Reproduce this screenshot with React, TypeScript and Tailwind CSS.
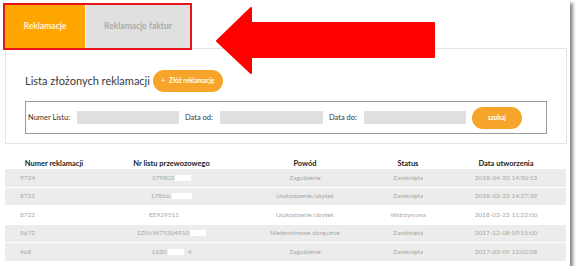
const rows = [
  { id: "9724", list: "179802", hidden: "w-[16px]", after: "", reason: "Zagubienie", status: "Zamknięta", date: "2018-04-20 14:50:13", bg: "bg-[#ececec]" },
  { id: "8731", list: "17866:", hidden: "w-[20px]", after: "", reason: "Uszkodzenie/ubytek", status: "Zamknięta", date: "2018-03-23 14:27:39", bg: "bg-[#ececec]" },
  { id: "8722", list: "EE929511", hidden: "w-[14px]", after: "", reason: "Uszkodzenie/ubytek", status: "Wstrzymana", date: "2018-03-23 11:22:00", bg: "bg-white" },
  { id: "5672", list: "1Z0VW75304910", hidden: "w-[16px]", after: "", reason: "Nieterminowe doręcznie", status: "Zamknięta", date: "2017-12-08 09:15:00", bg: "bg-[#ececec]" },
  { id: "468", list: "1630", hidden: "w-[16px]", after: "4", reason: "Zagubienie", status: "Zamknięta", date: "2017-03-09 12:02:08", bg: "bg-[#ececec]" },
];

const cols = "grid grid-cols-[98px_137px_130px_76px_120px] items-center";

function Arrow() {
  return (
    <svg
      className="absolute left-[215px] top-[6px] z-20"
      width="222"
      height="70"
      viewBox="0 0 222 70"
    >
      <polygon
        points="2,35 36,2 36,17 219,17 219,51 36,51 36,67"
        fill="#ff0000"
        stroke="#ff0000"
        strokeWidth="2"
        strokeLinejoin="round"
      />
    </svg>
  );
}

export default function App() {
  return (
    <div
      className="relative w-[570px] h-[266px] bg-white shadow-[3px_3px_3px_rgba(0,0,0,0.45)] overflow-visible"
      style={{ fontFamily: "Lato, 'Open Sans', sans-serif" }}
    >
      <Arrow />

      {/* tabs */}
      <div className="relative z-10 pt-[3px] pl-[3px]">
        <div className="flex w-[189px] h-[47px] border-2 border-[#e8141c] bg-white">
          <div className="flex w-[80px] items-center justify-center bg-[#ffa500] text-[8.5px] font-bold text-[#fff5dc]">
            Reklamacje
          </div>
          <div className="ml-px flex flex-1 items-center justify-center bg-[#e0e0e0] text-[8.5px] font-bold text-[#ababab]">
            Reklamacje faktur
          </div>
        </div>
      </div>

      {/* panel */}
      <div className="-mt-[2px] ml-[5px] w-[562px] border border-[#e6e6e6] pl-[19px] pt-[21px] pb-[9px]">
        <div className="flex h-[22px] items-center gap-[3px]">
          <span className="text-[11px] text-[#3a3a3a]">Lista złożonych reklamacji</span>
          <button className="flex h-[22px] w-[70px] items-center justify-center gap-[4px] rounded-full bg-[#f7a42a] text-[6.5px] font-bold text-white">
            <span>+</span>
            <span>Złóż reklamację</span>
          </button>
        </div>

        <div className="mt-[9px] flex h-[33px] w-[522px] items-center border border-[#9a9a9a] pl-[2px] text-[7.5px] text-[#333]">
          <span className="w-[49px]">Numer Listu:</span>
          <div className="h-[13px] w-[102px] bg-[#e0e0e0]" />
          <span className="ml-[6px] w-[35px]">Data od:</span>
          <div className="h-[13px] w-[103px] bg-[#e0e0e0]" />
          <span className="ml-[6px] w-[35px]">Data do:</span>
          <div className="h-[13px] w-[102px] bg-[#e0e0e0]" />
          <button className="ml-[6px] flex h-[22px] w-[50px] items-center justify-center rounded-full bg-[#f7a42a] text-[6.5px] font-bold text-white">
            szukaj
          </button>
        </div>
      </div>

      {/* table */}
      <div className="mt-[14px] ml-[5px] w-[561px]">
        <div className={`${cols} h-[11px] text-center text-[7.5px] font-bold text-[#222]`}>
          <span>Numer reklamacji</span>
          <span>Nr listu przewozowego</span>
          <span>Powód</span>
          <span>Status</span>
          <span>Data utworzenia</span>
        </div>
        {rows.map((r) => (
          <div
            key={r.id}
            className={`${cols} h-[18.5px] border-b border-white text-[6.5px] text-[#a8a8a8] ${r.bg}`}
          >
            <span className="pl-[15px]">{r.id}</span>
            <span className="flex items-center justify-center gap-[1px]">
              {r.list}
              <span className={`inline-block h-[6px] ${r.hidden} bg-white`} />
              {r.after && <span className="ml-[3px]">{r.after}</span>}
            </span>
            <span className="text-center">{r.reason}</span>
            <span className="text-center">{r.status}</span>
            <span className="text-center">{r.date}</span>
          </div>
        ))}
      </div>
    </div>
  );
}
